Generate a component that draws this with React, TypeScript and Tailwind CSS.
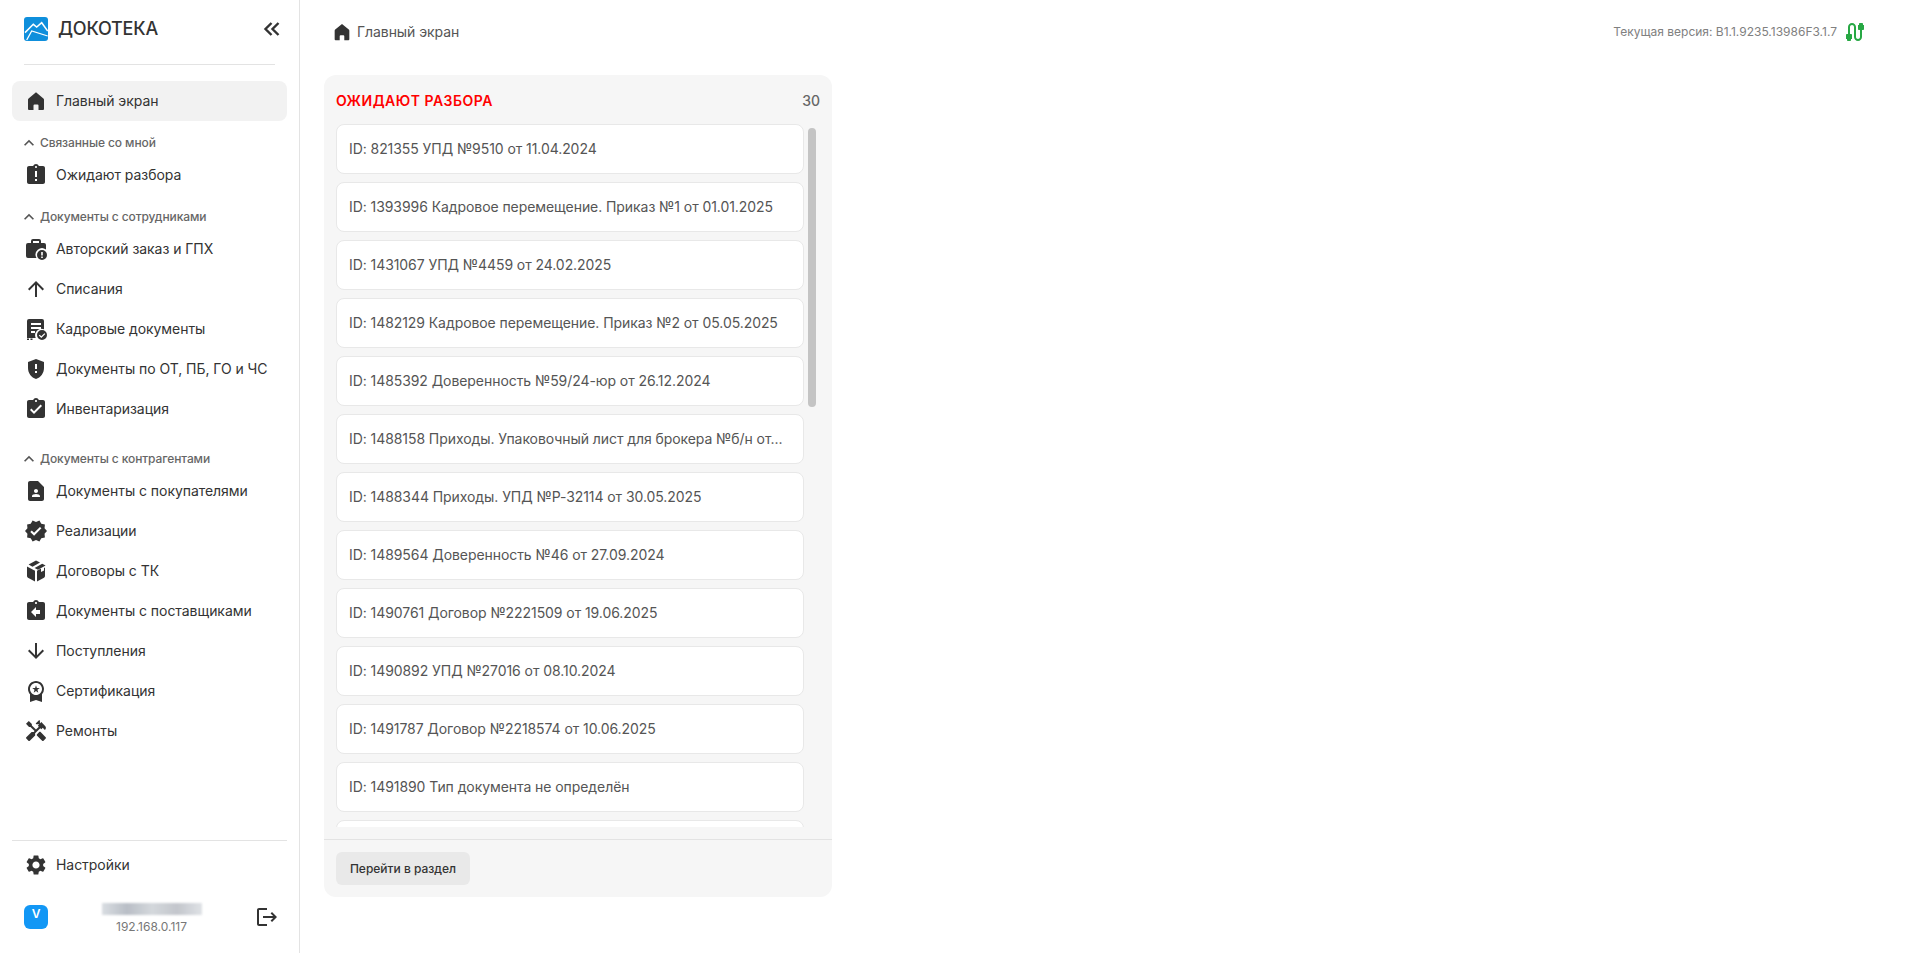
import React from "react";
import {
  MdAssignmentLate,
  MdArrowUpward,
  MdArrowDownward,
  MdGppMaybe,
  MdAssignmentTurnedIn,
  MdContactPage,
  MdVerified,
  MdAssignmentReturn,
  MdWorkspacePremium,
  MdHandyman,
  MdSettings,
  MdLogout,
  MdKeyboardArrowUp,
  MdCable,
} from "react-icons/md";

type IconType = React.ComponentType<{ className?: string }>;

const Logo = () => (
  <svg viewBox="0 0 24 24" className="w-6 h-6">
    <rect width="24" height="24" rx="3" fill="#0f8fdc" />
    <path d="M1 15.6 L9.3 7.3 L12.7 10 L17.7 5.7 L23.7 14" fill="none" stroke="#fff" strokeWidth="1.5" />
    <path d="M2.7 23 L7.7 14 L23.7 19" fill="none" stroke="#fff" strokeWidth="1.3" />
  </svg>
);

const CollapseIcon = ({ className }: { className?: string }) => (
  <svg viewBox="0 0 24 24" className={className} fill="none" stroke="currentColor" strokeWidth="2.4">
    <path d="M11.5 6 5.5 12l6 6M18.5 6l-6 6 6 6" />
  </svg>
);

const HomeIcon = ({ className }: { className?: string }) => (
  <svg viewBox="0 0 24 24" className={className} fill="currentColor">
    <path d="M12 3.2l7.4 6.2c.4.3.6.8.6 1.3V20a1 1 0 0 1-1 1h-4.5v-4.5a1 1 0 0 0-1-1h-3a1 1 0 0 0-1 1V21H5a1 1 0 0 1-1-1v-9.3c0-.5.2-1 .6-1.3L12 3.2Z" />
  </svg>
);

const BriefcaseAlert = ({ className }: { className?: string }) => (
  <svg viewBox="0 0 24 24" className={className} fill="currentColor">
    <path d="M9 2h6a2 2 0 0 1 2 2v2h3a2 2 0 0 1 2 2v4.5a6.5 6.5 0 0 0-9.5 8.5H4a2 2 0 0 1-2-2V8a2 2 0 0 1 2-2h3V4a2 2 0 0 1 2-2Zm0 2v2h6V4H9Z" />
    <path fillRule="evenodd" d="M18 13a5 5 0 1 1 0 10 5 5 0 0 1 0-10Zm-.8 2v3.6h1.6V15h-1.6Zm0 4.4V21h1.6v-1.6h-1.6Z" />
  </svg>
);

const DocCheck = ({ className }: { className?: string }) => (
  <svg viewBox="0 0 24 24" className={className} fill="currentColor">
    <path fillRule="evenodd" d="M5 2h13a2 2 0 0 1 2 2v8.3a6.5 6.5 0 0 0-8.3 8.7H3V4a2 2 0 0 1 2-2Zm2 4v2h10V6H7Zm0 4v2h10v-2H7Zm0 4v2h4v-2H7Z" />
    <path d="M3 21.5h2V23H3zM6.5 21.5h2V23h-2z" />
    <path fillRule="evenodd" d="M18 13a5 5 0 1 1 0 10 5 5 0 0 1 0-10Zm2.4 3.2L17.3 19.3l-1.6-1.6-.9.9 2.5 2.5 4-4-.9-.9Z" />
  </svg>
);

const PackageBox = ({ className }: { className?: string }) => (
  <svg viewBox="0 0 24 24" className={className} fill="currentColor">
    <path d="M12 1.5 16 3.6 8.5 7.7 4.6 5.6 12 1.5Z" />
    <path d="M18.2 4.8 21.6 6.6 14 10.8 10.6 9l7.6-4.2Z" />
    <path d="M3 7.4l8 4.4V22.5l-7-3.8a2 2 0 0 1-1-1.7V7.4Z" />
    <path d="M21 8.6V17a2 2 0 0 1-1 1.7l-7 3.8V11.8l4-2.2V13l3-1.6V9.1l1-.5Z" />
  </svg>
);

type Item = { label: string; icon: IconType; active?: boolean };

const Row = ({ label, icon: Icon, active }: Item) => (
  <div className={`flex items-center h-10 w-[275px] rounded-lg pl-3 gap-2 ${active ? "bg-[#f2f2f2]" : ""}`}>
    <Icon className="w-6 h-6 shrink-0 text-[#333333]" />
    <span className="text-sm leading-5 tracking-[-0.05px] text-[#333333]">{label}</span>
  </div>
);

const GroupLabel = ({ label, className }: { label: string; className: string }) => (
  <div className={`flex items-center pl-[7px] gap-[1px] h-6 ${className}`}>
    <MdKeyboardArrowUp className="w-5 h-5 text-[#555555]" />
    <span className="text-xs leading-4 font-medium text-[#666666] tracking-[-0.1px]">{label}</span>
  </div>
);

const docs = [
  "ID: 821355 УПД №9510 от 11.04.2024",
  "ID: 1393996 Кадровое перемещение. Приказ №1 от 01.01.2025",
  "ID: 1431067 УПД №4459 от 24.02.2025",
  "ID: 1482129 Кадровое перемещение. Приказ №2 от 05.05.2025",
  "ID: 1485392 Доверенность №59/24-юр от 26.12.2024",
  "ID: 1488158 Приходы. Упаковочный лист для брокера №б/н от...",
  "ID: 1488344 Приходы. УПД №Р-32114 от 30.05.2025",
  "ID: 1489564 Доверенность №46 от 27.09.2024",
  "ID: 1490761 Договор №2221509 от 19.06.2025",
  "ID: 1490892 УПД №27016 от 08.10.2024",
  "ID: 1491787 Договор №2218574 от 10.06.2025",
  "ID: 1491890 Тип документа не определён",
  "",
];

export default function App() {
  return (
    <div className="flex h-[953px] w-[1920px] overflow-hidden bg-white font-['Inter',sans-serif] text-[#333333]">
      {/* Sidebar */}
      <aside className="flex flex-col w-[300px] shrink-0 border-r border-[#e3e3e3]">
        <div className="flex items-center justify-between h-[56px] mt-[1px] pl-6 pr-[15px]">
          <div className="flex items-center gap-[10px]">
            <Logo />
            <span className="text-lg leading-6 font-medium tracking-[-0.2px] text-[#333333]">ДОКОТЕКА</span>
          </div>
          <CollapseIcon className="w-6 h-6 text-[#333333]" />
        </div>
        <div className="mx-6 mt-[7px] border-t border-[#e3e3e3] w-[251px]" />
        <nav className="flex flex-col pl-3 pt-4">
          <Row label="Главный экран" icon={HomeIcon} active />
          <GroupLabel label="Связанные со мной" className="mt-[10px]" />
          <Row label="Ожидают разбора" icon={MdAssignmentLate} />
          <GroupLabel label="Документы с сотрудниками" className="mt-[10px]" />
          <Row label="Авторский заказ и ГПХ" icon={BriefcaseAlert} />
          <Row label="Списания" icon={MdArrowUpward} />
          <Row label="Кадровые документы" icon={DocCheck} />
          <Row label="Документы по ОТ, ПБ, ГО и ЧС" icon={MdGppMaybe} />
          <Row label="Инвентаризация" icon={MdAssignmentTurnedIn} />
          <GroupLabel label="Документы с контрагентами" className="mt-[18px]" />
          <Row label="Документы с покупателями" icon={MdContactPage} />
          <Row label="Реализации" icon={MdVerified} />
          <Row label="Договоры с ТК" icon={PackageBox} />
          <Row label="Документы с поставщиками" icon={MdAssignmentReturn} />
          <Row label="Поступления" icon={MdArrowDownward} />
          <Row label="Сертификация" icon={MdWorkspacePremium} />
          <Row label="Ремонты" icon={MdHandyman} />
        </nav>
        <div className="mt-auto pl-3">
          <div className="border-t border-[#e3e3e3] w-[275px] pt-1">
            <Row label="Настройки" icon={MdSettings} />
          </div>
          <div className="flex items-center w-[275px] h-16 pl-3 pr-2">
            <div className="flex items-start justify-center w-6 h-6 rounded-md bg-[#1297f5] text-white text-xs font-semibold leading-[18px]">V</div>
            <div className="flex flex-col items-center flex-1 pt-1">
              <div className="w-[100px] h-3 bg-[linear-gradient(90deg,#d9dde2,#b9bec6,#d4d8dc,#c3c6cc,#dfe2e6)] blur-[1px]" />
              <span className="text-xs leading-4 mt-1 text-[#777777]">192.168.0.117</span>
            </div>
            <MdLogout className="w-6 h-6 text-[#333333]" />
          </div>
          <div className="h-[4px]" />
        </div>
      </aside>

      {/* Main */}
      <main className="flex-1 flex flex-col pl-6 min-w-0">
        <header className="flex items-center justify-between h-[64px] pr-[53px]">
          <div className="flex items-center gap-1 pl-[7px]">
            <HomeIcon className="w-[22px] h-[22px] text-[#333333]" />
            <span className="text-sm leading-5 tracking-[-0.07px] text-[#555555]">Главный экран</span>
          </div>
          <div className="flex items-center gap-[6px]">
            <span className="text-xs leading-4 text-[#808080]">Текущая версия: В1.1.9235.13986F3.1.7</span>
            <MdCable className="w-6 h-6 text-[#27a844]" />
          </div>
        </header>

        <section className="flex flex-col w-[508px] h-[822px] mt-[11px] rounded-xl bg-[#f6f6f6]">
          <div className="flex items-center justify-between h-[49px] pt-[2px] px-3">
            <span className="text-sm leading-5 font-semibold tracking-[0.5px] text-[#ff0000]">ОЖИДАЮТ РАЗБОРА</span>
            <span className="text-sm leading-5 font-medium text-[#666666]">30</span>
          </div>
          <div className="flex-1 min-h-0 relative pl-3">
            <div className="flex flex-col gap-2 h-[703px] overflow-hidden w-[468px]">
              {docs.map((d, i) => (
                <div key={i} className="flex items-center shrink-0 h-[50px] px-3 rounded-lg bg-white border border-[#e8e8e8]">
                  <span className="text-sm leading-5 tracking-[-0.07px] text-[#555555] whitespace-nowrap">{d}</span>
                </div>
              ))}
            </div>
            <div className="absolute left-[484px] top-[4px] w-2 h-[279px] rounded bg-[#c4c4c4]" />
          </div>
          <div className="flex items-center h-[58px] px-3 border-t border-[#e3e3e3]">
            <div className="flex items-center justify-center w-[134px] h-[33px] rounded-md bg-[#e9e9e9] text-xs font-medium text-[#333333]">Перейти в раздел</div>
          </div>
        </section>
      </main>
    </div>
  );
}
